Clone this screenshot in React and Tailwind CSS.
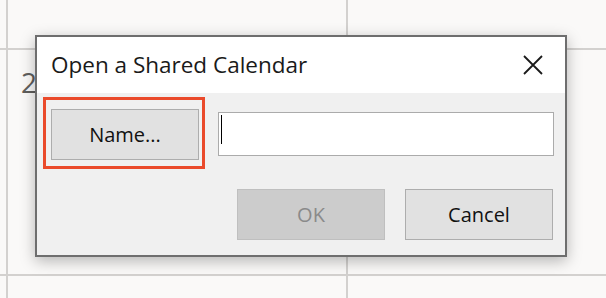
import React from 'react';

const CloseIcon = () => (
  <svg width="20" height="20" viewBox="0 0 20 20" fill="none">
    <path d="M1 1L19 19M19 1L1 19" stroke="#1a1a1a" strokeWidth="1.8" />
  </svg>
);

const App = () => {
  return (
    <div
      className="relative w-[606px] h-[298px] overflow-hidden bg-[#faf9f8]"
      style={{ fontFamily: '"Open Sans", "Noto Sans", sans-serif' }}
    >
      {/* calendar grid behind the dialog */}
      <div className="grid grid-cols-[6px_338px_1fr] grid-rows-[48px_224px_1fr] gap-[2px] bg-[#d3d1cf] w-full h-full">
        <div className="bg-[#faf9f8]" />
        <div className="bg-[#faf9f8]" />
        <div className="bg-[#faf9f8]" />
        <div className="bg-[#faf9f8]" />
        <div className="bg-[#faf9f8] pl-[13px] pt-[14px] text-[28px] leading-[36px] text-[#5f5e5c]">2</div>
        <div className="bg-[#faf9f8]" />
        <div className="bg-[#faf9f8]" />
        <div className="bg-[#faf9f8] pl-[17px] pt-[14px] text-[28px] leading-[36px] text-[#5f5e5c]">9</div>
        <div className="bg-[#faf9f8] pl-[20px] pt-[14px] text-[28px] leading-[36px] text-[#5f5e5c]">16</div>
      </div>

      {/* dialog */}
      <div className="absolute left-[35px] top-[35px] w-[532px] h-[222px] border-2 border-[#6e6e6e] bg-[#f0f0f0] shadow-[0_4px_14px_rgba(0,0,0,0.28)] flex flex-col">
        <div className="h-[56px] bg-white flex items-center justify-between pl-[14px] pr-[22px]">
          <span className="text-[22.5px] text-[#1a1a1a] leading-none">Open a Shared Calendar</span>
          <CloseIcon />
        </div>
        <div className="flex-1 flex flex-col pl-[6px] pr-[11px] pt-[4px]">
          <div className="flex items-start">
            <div className="border-[3px] border-[#ea4a2b] pl-[5px] pr-[3px] pt-[9px] pb-[6px]">
              <button className="w-[148px] h-[51px] bg-[#e1e1e1] border border-[#adadad] text-[20px] text-[#111]">
                Name...
              </button>
            </div>
            <div className="ml-[13px] mt-[15px] flex-1 h-[44px] bg-white border border-[#ababab] pl-[2px] pt-[2px]">
              <span className="block w-[1px] h-[29px] bg-black" />
            </div>
          </div>
          <div className="flex justify-end gap-[20px] mt-[20px] pr-[1px]">
            <button className="w-[148px] h-[51px] bg-[#cccccc] border border-[#bfbfbf] text-[20px] text-[#8a8a8a]">
              OK
            </button>
            <button className="w-[148px] h-[51px] bg-[#e1e1e1] border border-[#adadad] text-[20px] text-[#111]">
              Cancel
            </button>
          </div>
        </div>
      </div>
    </div>
  );
};

export default App;
